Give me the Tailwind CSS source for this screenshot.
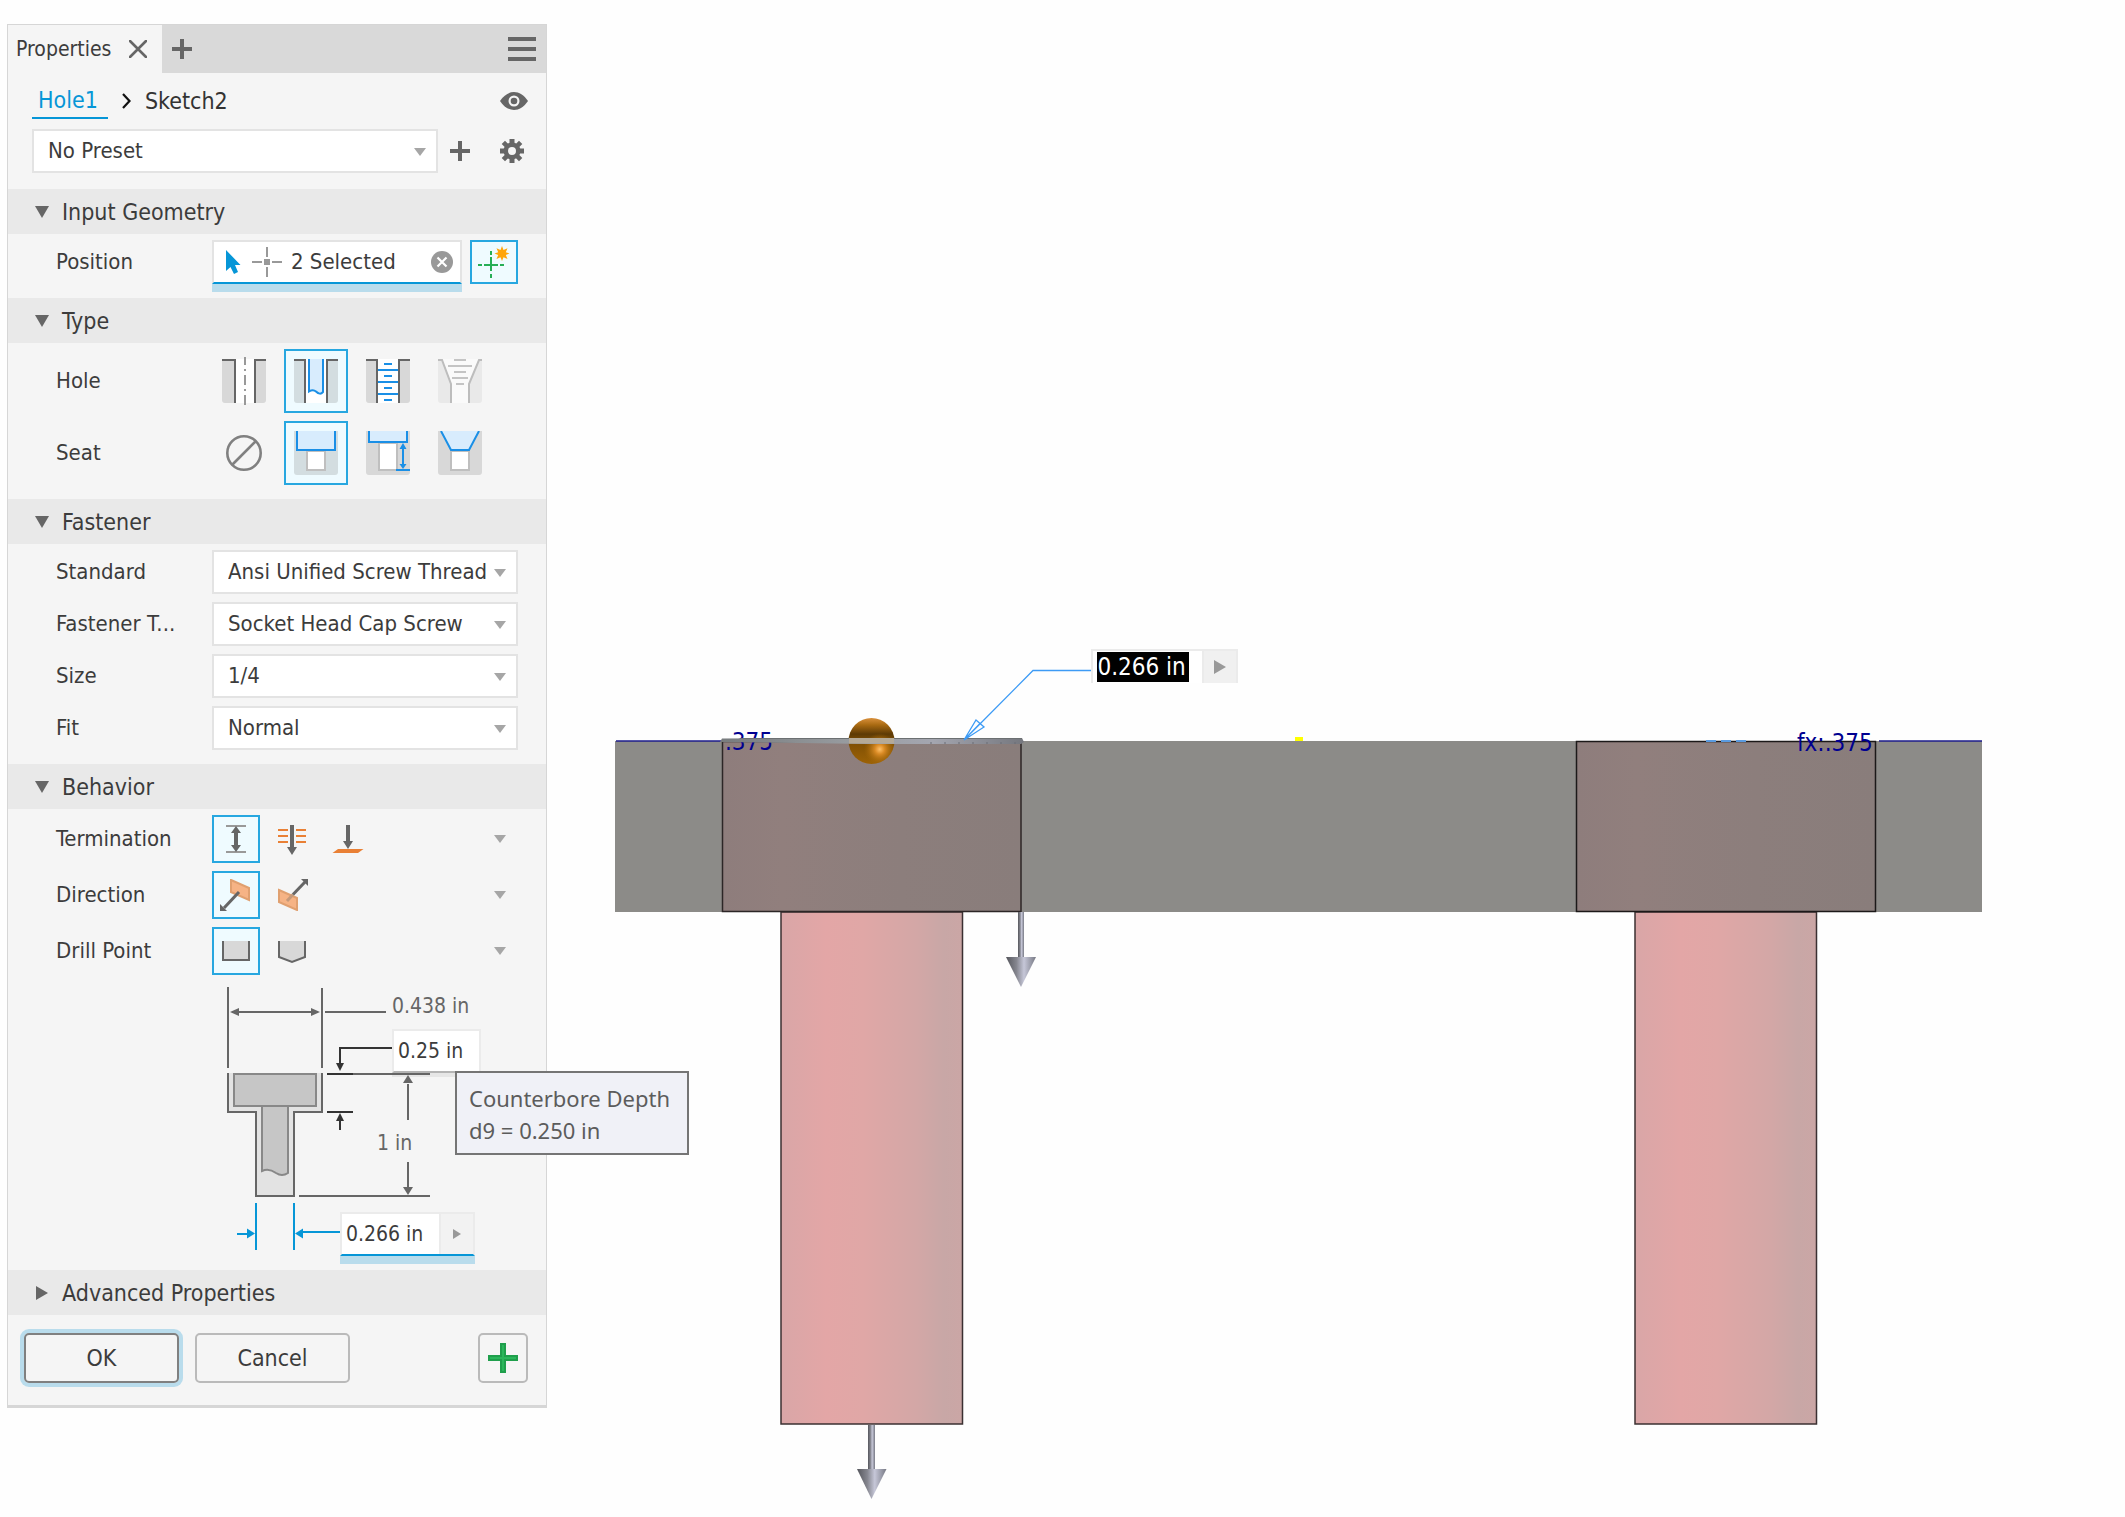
<!DOCTYPE html>
<html lang="en">
<head>
<meta charset="utf-8">
<title>Hole Properties</title>
<script src="https://cdn.jsdelivr.net/npm/@tailwindcss/browser@4"></script>
</head>
<body class="bg-[#fefefe] font-['DejaVu_Sans_Condensed','Noto_Sans',sans-serif] text-[22px] leading-[26px] text-[#3c3c3c]">
<main class="flex items-start">

  <!-- Properties panel -->
  <aside class="relative mt-6 ml-[7px] w-[540px] shrink-0 border border-b-[3px] border-[#d6d6d6] bg-[#f5f5f5]">
    <header class="flex h-12 items-stretch bg-[#d9d9d9]">
      <div class="flex w-[154px] items-center justify-between bg-[#f5f5f5] pr-[15px] pl-2 text-[21px]">
        <span>Properties</span>
        <button aria-label="Close tab"><svg class="block size-[18px]" viewBox="0 0 18 18"><path d="M1 1L17 17M17 1L1 17" stroke="#666" stroke-width="2.6" stroke-linecap="round"/></svg></button>
      </div>
      <button aria-label="New tab" class="ml-[10px]"><svg class="block size-5" viewBox="0 0 20 20"><path d="M10 0V20M0 10H20" stroke="#666" stroke-width="4"/></svg></button>
      <button aria-label="Panel menu" class="mr-[10px] ml-auto"><svg class="block h-6 w-7" viewBox="0 0 28 24"><path d="M0 2H28M0 12H28M0 22H28" stroke="#666" stroke-width="4"/></svg></button>
    </header>

    <nav class="flex h-[56px] items-center pr-[18px] pl-6 text-[23px]" aria-label="Breadcrumb">
      <a href="#hole1" class="flex h-9 items-center border-b-2 border-[#0696d7] px-[6px] pr-[10px] text-[#0696d7]">Hole1</a>
      <svg class="mr-[14px] ml-[14px] h-4 w-[9px]" viewBox="0 0 9 16" fill="none"><path d="M1 1L7.500 8L1 15" stroke="#111" stroke-width="2.200"/></svg>
      <span class="text-[#333]">Sketch2</span>
      <button aria-label="Toggle visibility" class="ml-auto"><svg class="block h-[18px] w-7" viewBox="0 0 28 18"><path d="M0 9C4 3 9 0 14 0S24 3 28 9C24 15 19 18 14 18S4 15 0 9Z" fill="#666"/><circle cx="14" cy="9" r="5.500" fill="#f5f5f5"/><circle cx="14" cy="9" r="3.300" fill="#666"/></svg></button>
    </nav>

    <div class="flex h-[60px] items-start pr-[22px] pl-6">
      <div class="relative w-[406px]">
        <select aria-label="Preset" class="block h-11 w-full appearance-none border-2 border-[#e3e3e3] bg-white pr-9 pl-[14px]"><option>No Preset</option></select>
        <svg class="pointer-events-none absolute top-[19px] right-3 h-2 w-3" viewBox="0 0 12 8"><path d="M0 0H12L6 8Z" fill="#a6a6a6"/></svg>
      </div>
      <button aria-label="Add preset" class="ml-3 h-11"><svg class="block size-5" viewBox="0 0 20 20"><path d="M10 0V20M0 10H20" stroke="#666" stroke-width="4"/></svg></button>
      <button aria-label="Preset settings" class="ml-auto h-11"><svg class="block size-6" viewBox="0 0 24 24"><g fill="#666"><path fill-rule="evenodd" d="M12 3.500A8.500 8.500 0 1 0 12 20.500A8.500 8.500 0 1 0 12 3.500ZM12 8A4 4 0 1 1 12 16A4 4 0 1 1 12 8Z"/><path d="M9.500 0H14.500V5H9.500ZM9.500 19H14.500V24H9.500ZM0 9.500H5V14.500H0ZM19 9.500H24V14.500H19Z"/><path d="M1.700 5L5 1.700L8.500 5.200L5.200 8.500ZM19 1.700L22.300 5L18.800 8.500L15.500 5.200ZM22.300 19L19 22.300L15.500 18.800L18.800 15.500ZM5 22.300L1.700 19L5.200 15.500L8.500 18.800Z"/></g></svg></button>
    </div>

    <!-- Input geometry -->
    <section>
      <h2><button aria-expanded="true" class="flex h-[45px] w-full items-center gap-[13px] bg-[#e9e9e9] pl-[27px] text-[23px]"><svg class="h-3 w-[14px]" viewBox="0 0 14 12"><path d="M0 0H14L7 12Z" fill="#666"/></svg>Input Geometry</button></h2>
      <div class="flex h-16 items-start pt-[6px] pl-12">
        <span class="flex h-11 w-[156px] items-center">Position</span>
        <div class="flex h-[52px] w-[250px] flex-col bg-[#b9dcec]">
          <div class="flex h-11 items-center border-2 border-[#e3e3e3] border-b-[#0696d7] bg-white pl-3">
            <svg class="h-6 w-[15px]" viewBox="0 0 15 24"><path d="M0 0V21L4.500 17L8 24L12 22L9 15H14.500Z" fill="#0696d7"/></svg>
            <svg class="ml-[11px] h-[30px] w-[30px]" viewBox="0 0 30 30"><path d="M15 0V10M15 20V30M0 15H10M20 15H30" stroke="#999" stroke-width="2"/><path d="M12 12H18V18H12Z" fill="#999"/></svg>
            <span class="ml-[9px]">2 Selected</span>
            <button aria-label="Clear selection" class="mr-[7px] ml-auto"><svg class="block size-[22px]" viewBox="0 0 22 22"><circle cx="11" cy="11" r="11" fill="#999"/><path d="M6.500 6.500L15.500 15.500M15.500 6.500L6.500 15.500" stroke="#fff" stroke-width="2.200"/></svg></button>
          </div>
        </div>
        <button aria-label="Allow center points" class="ml-2 flex h-11 w-12 items-center justify-center border-2 border-[#27a7e0] bg-[#effbff]"><svg class="block h-8 w-8" viewBox="0 0 32 32"><path d="M13 11V25M6 19H20M13 5V9M13 28V32M0 19H4M22 19H26" stroke="#27ae56" stroke-width="2"/><path d="M24 0L25.500 4L29.500 2.300L27.800 6.200L31.500 7.500L27.800 9L29.500 13L25.500 11.200L24 15L22.500 11.200L18.500 13L20.200 9L16.500 7.500L20.200 6.200L18.500 2.300L22.500 4Z" fill="#ffa50a"/></svg></button>
      </div>
    </section>

    <!-- Type -->
    <section>
      <h2><button aria-expanded="true" class="flex h-[45px] w-full items-center gap-[13px] bg-[#e9e9e9] pl-[27px] text-[23px]"><svg class="h-3 w-[14px]" viewBox="0 0 14 12"><path d="M0 0H14L7 12Z" fill="#666"/></svg>Type</button></h2>
      <div class="flex h-[156px] flex-col gap-2 pt-[6px] pl-12">
        <div class="flex h-16 items-center">
          <span class="w-[156px]">Hole</span>
          <div class="flex gap-2" role="group" aria-label="Hole">
            <button aria-label="Simple hole" class="flex size-16 items-center justify-center"><svg class="size-11 overflow-visible" viewBox="0 0 44 44"><path d="M0 0H44V41Q44 44 41 44H3Q0 44 0 41Z" fill="#d8d8d8"/><path d="M14 0H32V44H14Z" fill="#fff"/><path d="M0 1H13V44M44 1H33V44" fill="none" stroke="#666" stroke-width="2"/><path d="M23 -2V6M23 10V12M23 16V26M23 30V32M23 36V46" stroke="#999" stroke-width="2"/></svg></button>
            <button aria-label="Clearance hole" aria-pressed="true" class="flex size-16 items-center justify-center border-2 border-[#27a7e0] bg-[#effbff]"><svg class="size-11 shrink-0" viewBox="0 0 44 44"><path d="M0 0H44V41Q44 44 41 44H3Q0 44 0 41Z" fill="#d3dde0"/><path d="M12 0H32V44H12Z" fill="#fff"/><path d="M0 1H11V44M44 1H33V44" fill="none" stroke="#666" stroke-width="2"/><path d="M15 0V32Q19 30 22 33Q26 36 29 33V0" fill="#d8ecfd"/><path d="M15 0V32.500Q19 30 22 32.500Q26 36.500 29 33V0" fill="none" stroke="#1a8fe6" stroke-width="2"/></svg></button>
            <button aria-label="Tapped hole" class="flex size-16 items-center justify-center"><svg class="size-11" viewBox="0 0 44 44"><path d="M0 0H44V41Q44 44 41 44H3Q0 44 0 41Z" fill="#d8d8d8"/><path d="M12 0H32V44H12Z" fill="#fff"/><path d="M0 1H11V44M44 1H33V44" fill="none" stroke="#666" stroke-width="2"/><path d="M18 5H26M12 11H32M18 17H26M12 23H32M18 29H26M12 35H32M18 41H26" stroke="#1a8fe6" stroke-width="2"/></svg></button>
            <button aria-label="Taper tapped hole" class="flex size-16 items-center justify-center"><svg class="size-11" viewBox="0 0 44 44"><path d="M0 0H44V41Q44 44 41 44H3Q0 44 0 41Z" fill="#e9e9e9"/><path d="M4 0L13 25V44H31V25L41 0Z" fill="#fafafa"/><path d="M0 1H4L13 25V44M44 1H41L31 25V44" fill="none" stroke="#bdbdbd" stroke-width="2"/><path d="M16 1H28M10 7H34M16 13H28M14 19H30M18 25H26" stroke="#c4c4c4" stroke-width="2"/></svg></button>
          </div>
        </div>
        <div class="flex h-16 items-center">
          <span class="w-[156px]">Seat</span>
          <div class="flex gap-2" role="group" aria-label="Seat">
            <button aria-label="None" class="flex size-16 items-center justify-center"><svg class="size-9" viewBox="0 0 36 36" fill="none" stroke="#808080" stroke-width="2.600"><circle cx="18" cy="18" r="16.700"/><path d="M6 30L30 6"/></svg></button>
            <button aria-label="Counterbore" aria-pressed="true" class="flex size-16 items-center justify-center border-2 border-[#27a7e0] bg-[#effbff]"><svg class="size-11 shrink-0" viewBox="0 0 44 44"><path d="M0 0H44V41Q44 44 41 44H3Q0 44 0 41Z" fill="#d3dde0"/><path d="M13 20H31V39H13Z" fill="#fff" stroke="#bfbfbf" stroke-width="2"/><path d="M3 0V19H41V0" fill="#d8ecfd" stroke="#1a8fe6" stroke-width="2"/></svg></button>
            <button aria-label="Spotface" class="flex size-16 items-center justify-center"><svg class="size-11" viewBox="0 0 44 44"><path d="M0 0H44V41Q44 44 41 44H3Q0 44 0 41Z" fill="#d8d8d8"/><path d="M13 12H31V39H13Z" fill="#fff" stroke="#bfbfbf" stroke-width="2"/><path d="M3 0V11H41V0" fill="#d8ecfd" stroke="#1a8fe6" stroke-width="2"/><path d="M30 39H44M37 16V36" stroke="#1a8fe6" stroke-width="2"/><path d="M37 12L40.500 18H33.500ZM37 38L40.500 33H33.500Z" fill="#1a8fe6"/></svg></button>
            <button aria-label="Countersink" class="flex size-16 items-center justify-center"><svg class="size-11" viewBox="0 0 44 44"><path d="M0 0H44V41Q44 44 41 44H3Q0 44 0 41Z" fill="#d8d8d8"/><path d="M13 20H31V39H13Z" fill="#fff" stroke="#bfbfbf" stroke-width="2"/><path d="M3 0L13 19H31L41 0" fill="#d8ecfd" stroke="#1a8fe6" stroke-width="2"/></svg></button>
          </div>
        </div>
      </div>
    </section>

    <!-- Fastener -->
    <section>
      <h2><button aria-expanded="true" class="flex h-[45px] w-full items-center gap-[13px] bg-[#e9e9e9] pl-[27px] text-[23px]"><svg class="h-3 w-[14px]" viewBox="0 0 14 12"><path d="M0 0H14L7 12Z" fill="#666"/></svg>Fastener</button></h2>
      <div class="flex h-[220px] flex-col gap-2 pt-[6px] pr-7 pl-12">
        <div class="flex h-11 items-center">
          <label for="standard" class="w-[156px] shrink-0">Standard</label>
          <div class="relative min-w-0 flex-1">
            <select id="standard" class="block h-11 w-full appearance-none border-2 border-[#e3e3e3] bg-white pr-[29px] pl-[14px]"><option>Ansi Unified Screw Threads</option></select>
            <svg class="pointer-events-none absolute top-[19px] right-3 h-2 w-3" viewBox="0 0 12 8"><path d="M0 0H12L6 8Z" fill="#a6a6a6"/></svg>
          </div>
        </div>
        <div class="flex h-11 items-center">
          <label for="ftype" class="w-[156px] shrink-0">Fastener T...</label>
          <div class="relative min-w-0 flex-1">
            <select id="ftype" class="block h-11 w-full appearance-none border-2 border-[#e3e3e3] bg-white pr-[29px] pl-[14px]"><option>Socket Head Cap Screw</option></select>
            <svg class="pointer-events-none absolute top-[19px] right-3 h-2 w-3" viewBox="0 0 12 8"><path d="M0 0H12L6 8Z" fill="#a6a6a6"/></svg>
          </div>
        </div>
        <div class="flex h-11 items-center">
          <label for="size" class="w-[156px] shrink-0">Size</label>
          <div class="relative min-w-0 flex-1">
            <select id="size" class="block h-11 w-full appearance-none border-2 border-[#e3e3e3] bg-white pr-[29px] pl-[14px]"><option>1/4</option></select>
            <svg class="pointer-events-none absolute top-[19px] right-3 h-2 w-3" viewBox="0 0 12 8"><path d="M0 0H12L6 8Z" fill="#a6a6a6"/></svg>
          </div>
        </div>
        <div class="flex h-11 items-center">
          <label for="fit" class="w-[156px] shrink-0">Fit</label>
          <div class="relative min-w-0 flex-1">
            <select id="fit" class="block h-11 w-full appearance-none border-2 border-[#e3e3e3] bg-white pr-[29px] pl-[14px]"><option>Normal</option></select>
            <svg class="pointer-events-none absolute top-[19px] right-3 h-2 w-3" viewBox="0 0 12 8"><path d="M0 0H12L6 8Z" fill="#a6a6a6"/></svg>
          </div>
        </div>
      </div>
    </section>

    <!-- Behavior -->
    <section>
      <h2><button aria-expanded="true" class="flex h-[45px] w-full items-center gap-[13px] bg-[#e9e9e9] pl-[27px] text-[23px]"><svg class="h-3 w-[14px]" viewBox="0 0 14 12"><path d="M0 0H14L7 12Z" fill="#666"/></svg>Behavior</button></h2>
      <div class="flex flex-col gap-2 pt-[6px] pr-10 pl-12">
        <div class="flex h-12 items-center">
          <span class="w-[156px]">Termination</span>
          <div class="flex gap-2" role="group" aria-label="Termination">
            <button aria-label="Distance" aria-pressed="true" class="flex size-12 items-center justify-center border-2 border-[#27a7e0] bg-[#effbff]"><svg class="size-8 shrink-0" viewBox="0 0 32 32"><path d="M6 3H26M6 29H26" stroke="#999" stroke-width="2"/><path d="M16 7V25" stroke="#666" stroke-width="4"/><path d="M16 3L21 10H11ZM16 29L21 22H11Z" fill="#666"/></svg></button>
            <button aria-label="Through all" class="flex size-12 items-center justify-center"><svg class="size-8" viewBox="0 0 32 32"><path d="M2 7H12M2 13H12M2 19H12M20 7H30M20 13H30M20 19H30" stroke="#e98035" stroke-width="2"/><path d="M16 2V26" stroke="#666" stroke-width="4"/><path d="M16 32L21 24H11Z" fill="#666"/></svg></button>
            <button aria-label="To" class="flex size-12 items-center justify-center"><svg class="size-8" viewBox="0 0 32 32"><path d="M16 2V20" stroke="#666" stroke-width="4"/><path d="M16 26L21 18H11Z" fill="#666"/><path d="M6 26H31.500L26 30H.500Z" fill="#e98035"/></svg></button>
          </div>
          <svg class="ml-auto h-2 w-3" viewBox="0 0 12 8"><path d="M0 0H12L6 8Z" fill="#a6a6a6"/></svg>
        </div>
        <div class="flex h-12 items-center">
          <span class="w-[156px]">Direction</span>
          <div class="flex gap-2" role="group" aria-label="Direction">
            <button aria-label="Default direction" aria-pressed="true" class="flex size-12 items-center justify-center border-2 border-[#27a7e0] bg-[#effbff]"><svg class="size-8 shrink-0" viewBox="0 0 32 32"><path d="M11 1L29 9V21L11 13Z" fill="#f6b385" stroke="#e0a070" stroke-width="2"/><path d="M19 13L4 29" stroke="#666" stroke-width="3"/><path d="M0 25V32H7Z" fill="#666"/></svg></button>
            <button aria-label="Flipped direction" class="flex size-12 items-center justify-center"><svg class="size-8" viewBox="0 0 32 32"><path d="M3 11L21 19V31L3 23Z" fill="#f6b385" stroke="#e0a070" stroke-width="2"/><path d="M11 22L17 15.500" stroke="#c4997a" stroke-width="3"/><path d="M17 15.500L29 3" stroke="#666" stroke-width="3"/><path d="M25 0H32V7Z" fill="#666"/></svg></button>
          </div>
          <svg class="ml-auto h-2 w-3" viewBox="0 0 12 8"><path d="M0 0H12L6 8Z" fill="#a6a6a6"/></svg>
        </div>
        <div class="flex h-12 items-center">
          <span class="w-[156px]">Drill Point</span>
          <div class="flex gap-2" role="group" aria-label="Drill Point">
            <button aria-label="Flat" aria-pressed="true" class="flex size-12 items-center justify-center border-2 border-[#27a7e0] bg-[#effbff]"><svg class="size-8 shrink-0" viewBox="0 0 32 32"><path d="M3 6V25H29V6" fill="#d8d8d8" stroke="#666" stroke-width="2"/></svg></button>
            <button aria-label="Angle" class="flex size-12 items-center justify-center"><svg class="size-8" viewBox="0 0 32 32"><path d="M3 6V22L16 27L29 22V6" fill="#d8d8d8" stroke="#666" stroke-width="2"/></svg></button>
          </div>
          <svg class="ml-auto h-2 w-3" viewBox="0 0 12 8"><path d="M0 0H12L6 8Z" fill="#a6a6a6"/></svg>
        </div>
      </div>

      <!-- Counterbore dimension diagram -->
      <div class="relative h-[295px] text-[21px]">
        <svg class="block h-[295px] w-[538px]" viewBox="8 975 538 295" fill="none" stroke="#666" stroke-width="2">
          <path d="M228 987V1068M322 988V1068M232 1012H318M325 1012H386"/>
          <path d="M230 1012L239 1008V1016ZM320 1012L311 1008V1016Z" fill="#666" stroke="none"/>
          <path d="M228 1073V1112H256V1196H294V1112H322V1073" fill="#e3e3e3"/>
          <path d="M262 1106V1171C268 1168 272 1170 276 1173Q282 1177 288 1173V1106" fill="#c6c6c6" stroke="#888"/>
          <path d="M234 1074H316V1106H234Z" fill="#c6c6c6" stroke="#888"/>
          <path d="M353 1074H430M299 1196H430M408 1084V1120M408 1162V1188"/>
          <path d="M408 1075L413 1083H403ZM408 1195L413 1187H403Z" fill="#666" stroke="none"/>
          <path d="M392 1048H339M340 1048V1064M327 1074H353M327 1112H353M340 1120V1130" stroke="#333"/>
          <path d="M340 1071L344 1063H336ZM340 1113L344 1121H336Z" fill="#333" stroke="none"/>
          <path d="M256 1203V1250M294 1203V1250M237 1234H248M302 1232H341" stroke="#0696d7"/>
          <path d="M255 1233.500L247 1228.500V1238.500ZM295 1233.500L303 1228.500V1238.500Z" fill="#0696d7" stroke="none"/>
        </svg>
        <span class="absolute top-[18px] left-[384px] text-[#666]">0.438 in</span>
        <span class="absolute top-[155px] left-[369px] text-[#666]">1 in</span>
        <div class="absolute top-[54px] left-[384px] w-[89px]">
          <input aria-label="Counterbore Depth" value="0.25 in" class="block h-11 w-full border-2 border-[#ebebeb] border-b-[#b4b4b4] bg-white pl-1">
          <div class="h-1 bg-[#666]/10"></div>
        </div>
        <div class="absolute top-[237px] left-[332px] w-[135px] bg-[#b9dcec] pb-2">
          <div class="flex h-11 border-2 border-[#ebebeb] border-b-[#0696d7] bg-white">
            <input aria-label="Hole diameter" value="0.266 in" class="block w-[97px] pl-1">
            <button aria-label="Diameter options" class="flex flex-1 items-center justify-center border-l-2 border-[#ebebeb] bg-[#f2f2f2]"><svg class="h-[10px] w-2" viewBox="0 0 8 10"><path d="M0 0L8 5L0 10Z" fill="#999"/></svg></button>
          </div>
        </div>
        <div role="tooltip" class="absolute top-[96px] left-[447px] z-10 h-[84px] w-[234px] border-2 border-[#757575] bg-[#f0f1f7] px-3 pt-[9px] font-['Noto_Sans',sans-serif] text-[22px] leading-8 whitespace-nowrap text-[#5c5c5c]">Counterbore Depth<br>d9 = 0.250 in</div>
      </div>
    </section>

    <section>
      <h2><button aria-expanded="false" class="flex h-[45px] w-full items-center gap-[14px] bg-[#e9e9e9] pl-[28px] text-[23px]"><svg class="h-[14px] w-3" viewBox="0 0 12 14"><path d="M0 0L12 7L0 14Z" fill="#666"/></svg>Advanced Properties</button></h2>
    </section>

    <footer class="flex h-[90px] items-start gap-4 pt-[18px] pr-[18px] pl-4 text-[23px]">
      <button class="h-[50px] w-[155px] rounded-[5px] border-2 border-[#808080] ring-4 ring-[#b9dcec]">OK</button>
      <button class="h-[50px] w-[155px] rounded-[5px] border-2 border-[#bababa]">Cancel</button>
      <button aria-label="Create and start new" class="ml-auto flex size-[50px] items-center justify-center rounded-[5px] border-2 border-[#bababa]"><svg class="size-[30px]" viewBox="0 0 30 30"><path d="M12 0H18V12H30V18H18V30H12V18H0V12H12Z" fill="#1f9f4c"/><path d="M14 2H16V14H28V16H16V28H14V16H2V14H14Z" fill="#2bb65b"/></svg></button>
    </footer>
  </aside>

  <!-- Model view -->
  <section class="relative min-w-0 flex-1" aria-label="Model view">
    <svg class="block w-full" viewBox="547 0 1578 1517">
      <defs>
        <linearGradient id="pin"><stop offset="0" stop-color="#d9a6a7"/><stop offset=".25" stop-color="#e3a6a6"/><stop offset=".45" stop-color="#e0a7a6"/><stop offset=".75" stop-color="#d3a7a6"/><stop offset=".9" stop-color="#c8a7a6"/><stop offset="1" stop-color="#cba6a5"/></linearGradient>
        <linearGradient id="bore"><stop offset="0" stop-color="#8e7d7c"/><stop offset=".2" stop-color="#917f7d"/><stop offset=".6" stop-color="#8c7e7c"/><stop offset="1" stop-color="#897d7b"/></linearGradient>
        <linearGradient id="steel"><stop offset="0" stop-color="#55565c"/><stop offset=".35" stop-color="#85868f"/><stop offset=".6" stop-color="#c6c7d8"/><stop offset="1" stop-color="#777984"/></linearGradient>
        <linearGradient id="ring"><stop offset="0" stop-color="#777b7d"/><stop offset=".4" stop-color="#969a9e"/><stop offset=".7" stop-color="#a4a6b0"/><stop offset="1" stop-color="#75777e"/></linearGradient>
        <linearGradient id="ballTop" x2="0" y2="1"><stop offset="0" stop-color="#d9903c"/><stop offset=".15" stop-color="#a96a12"/><stop offset=".35" stop-color="#5d3a05"/><stop offset=".5" stop-color="#7d4e04"/><stop offset="1" stop-color="#9c6206"/></linearGradient>
        <radialGradient id="ballGlow" cx=".68" cy=".68" r=".35"><stop offset="0" stop-color="#ffc067"/><stop offset=".3" stop-color="#d98a24"/><stop offset="1" stop-color="#a06505" stop-opacity="0"/></radialGradient>
      </defs>
      <path d="M615 741H1982V912H615Z" fill="#8c8b88"/>
      <path d="M781 912H962.500V1424H781Z" fill="url(#pin)" stroke="#3b3032" stroke-width="1.500"/>
      <path d="M1635 912H1816.500V1424H1635Z" fill="url(#pin)" stroke="#3b3032" stroke-width="1.500"/>
      <path d="M722.500 741.500H1021V911.500H722.500Z" fill="url(#bore)" stroke="#2c2626" stroke-width="1.500"/>
      <path d="M1576.500 741.500H1875.500V911.500H1576.500Z" fill="url(#bore)" stroke="#1c1919" stroke-width="1.500"/>
      <path d="M616 741H722M1879 741H1982" stroke="#1c1c8c" stroke-width="1.500"/>
      <path d="M1706 741H1716M1721 741H1731M1736 741H1746" stroke="#5a9be0" stroke-width="2"/>
      <path d="M1295 737H1303V741H1295Z" fill="#ff0"/>
      <g font-size="24" fill="#000090"><text x="725" y="750">.375</text><text x="1797" y="751">fx:.375</text></g>
      <circle cx="871.500" cy="741" r="23" fill="url(#ballTop)"/><circle cx="871.500" cy="741" r="23" fill="url(#ballGlow)"/>
      <path d="M722 738.500L871 738H1022L1024 742L1021 744H870L720 742Z" fill="url(#ring)"/>
      <path d="M740 738.500H1022" stroke="#6c7072"/>
      <path d="M849 738H894V743.500H849Z" fill="#b5aa98"/>
      <path d="M930 743H1020" stroke="#6a6c74" stroke-dasharray="2 12"/>
      <path d="M1098 670.500H1033L964 740L976 720L984 727L964 740L980 723.500" fill="none" stroke="#3d9bf5" stroke-width="1.300"/>
      <rect x="1018" y="912" width="6" height="46" fill="url(#steel)"/><path d="M1006 957H1036L1021 987Z" fill="url(#steel)"/>
      <rect x="868" y="1425" width="7" height="45" fill="url(#steel)"/><path d="M857 1469H886.500L871.500 1499Z" fill="url(#steel)"/>
    </svg>
    <!-- In-canvas value editor -->
    <div class="absolute top-[42.8%] left-[34.5%] flex h-[34px] w-[147px] border-2 border-b-0 border-[#ebebeb] bg-white text-[24px]">
      <label class="sr-only" for="dia">Diameter</label>
      <div class="flex w-[109px] items-center pl-1"><input id="dia" value="0.266 in" class="block h-[30px] w-[92px] bg-black text-white"></div>
      <button aria-label="Value options" class="flex flex-1 items-center justify-center border-l-2 border-[#ebebeb] bg-[#f0f0f0]"><svg class="h-[14px] w-3" viewBox="0 0 12 14"><path d="M0 0L12 7L0 14Z" fill="#999"/></svg></button>
    </div>
  </section>
</main>
</body>
</html>
